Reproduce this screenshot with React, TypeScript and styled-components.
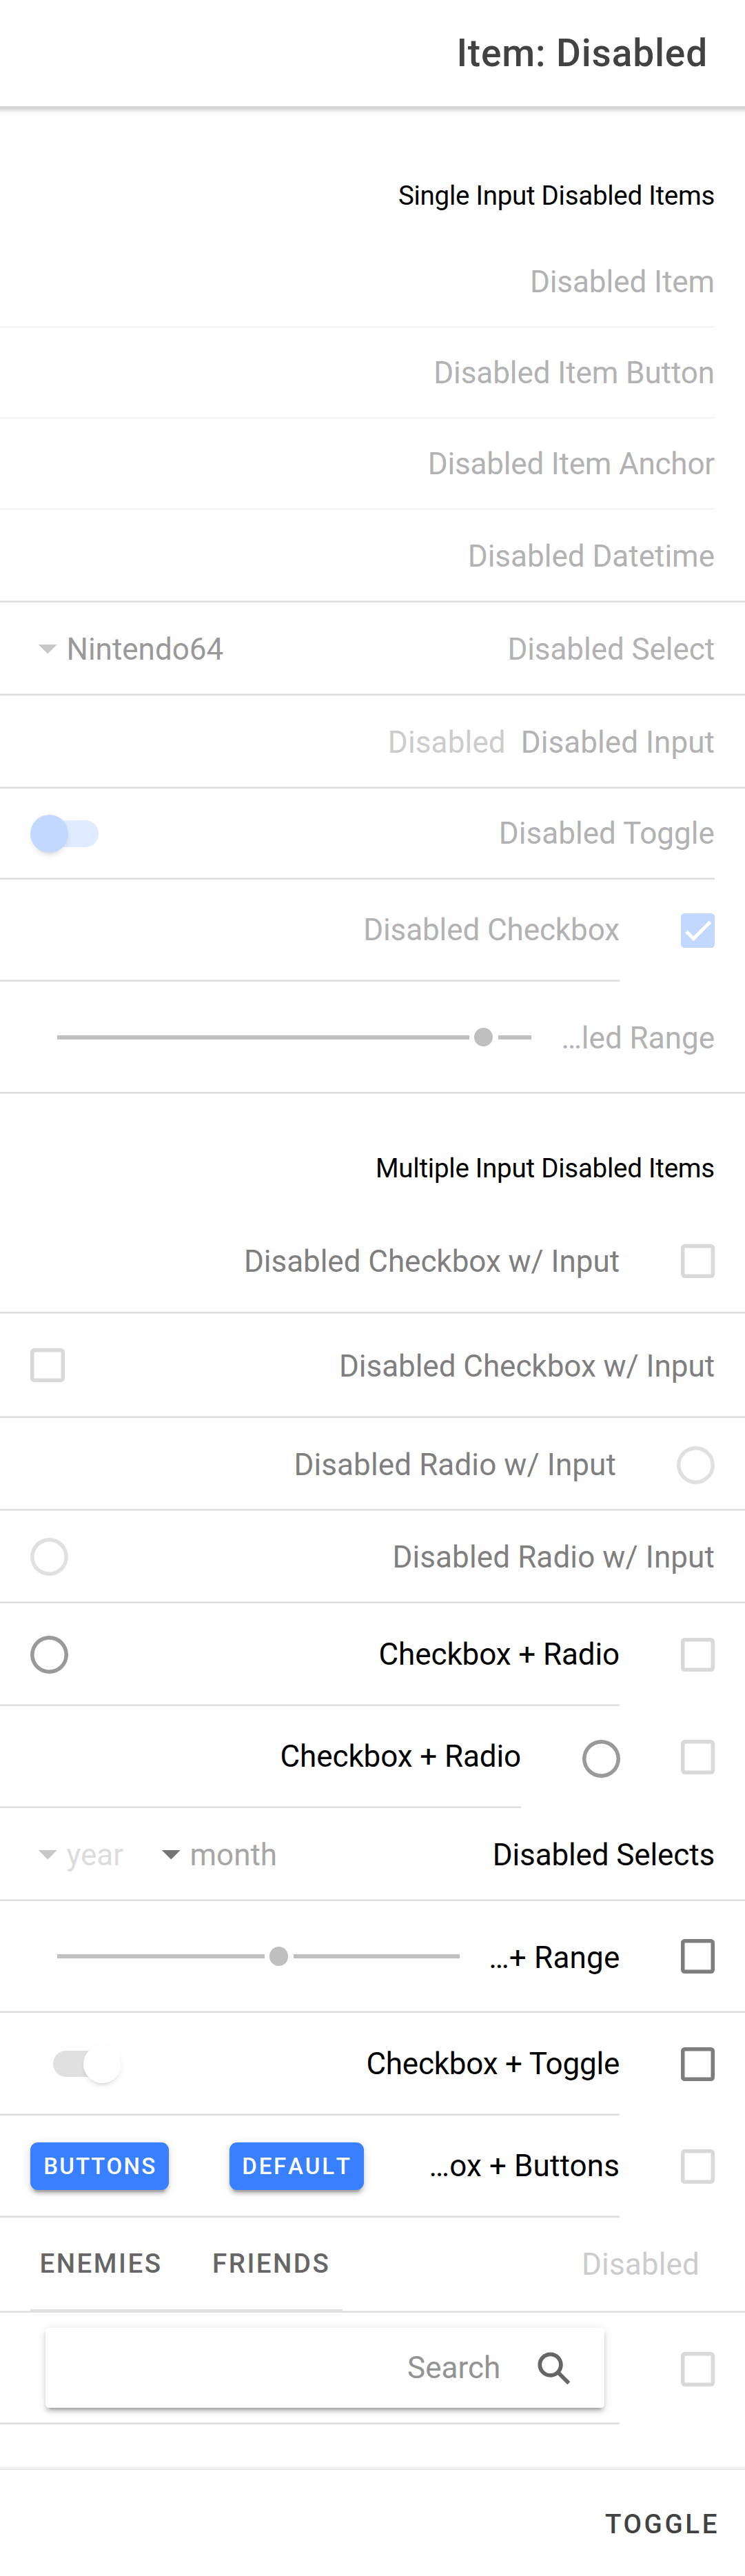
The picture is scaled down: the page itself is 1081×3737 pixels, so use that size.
import React from "react";
import styled, { createGlobalStyle } from "styled-components";

const GlobalStyle = createGlobalStyle`
  *, *::before, *::after { box-sizing: border-box; }
  html, body { margin: 0; background: #fff; }
  body { font-family: Roboto, "Liberation Sans", sans-serif; font-size: 44px; color: #000; }
`;

const Page = styled.div`
  width: 1081px;
  height: 3737px;
  display: flex;
  flex-direction: column;
  background: #fff;
  overflow: hidden;
`;

const Header = styled.header`
  height: 154px;
  flex: none;
  display: flex;
  align-items: center;
  justify-content: flex-end;
  padding: 0 54px;
`;

const HeaderShade = styled.div`
  height: 14px;
  flex: none;
  background: linear-gradient(#dadada 0, #d2d2d2 2px, #dedede 5px, #f2f2f2 8px, #fbfbfb 11px, #fff 14px);
`;

const Title = styled.h1`
  margin: 0;
  font-size: 55px;
  font-weight: 500;
  letter-spacing: 0.85px;
  line-height: 64px;
  color: #424242;
`;

const Content = styled.main`
  flex: 1;
  min-height: 0;
`;

const ListHeader = styled.div<{ $h: number; $top: number; $ls: number }>`
  height: ${(p) => p.$h}px;
  padding: ${(p) => p.$top}px 44px 0;
  text-align: right;
  font-size: 38.5px;
  line-height: 46px;
  letter-spacing: ${(p) => p.$ls}px;
`;

/* A row: the optional start slot sits at the right, after the underlined part. */
const Item = styled.div<{ $h: number }>`
  height: ${(p) => p.$h}px;
  display: flex;
  align-items: stretch;
`;

const hairlines = {
  top: "linear-gradient(#ececec 1px, #dedede 1px)",
  bottom: "linear-gradient(#dedede 2px, #ececec 2px)",
  faint: "linear-gradient(#f5f5f5 2px, #fafafa 2px)",
};

const Inner = styled.div<{ $line?: keyof typeof hairlines }>`
  flex: 1;
  min-width: 0;
  display: flex;
  align-items: center;
  padding: 0 0 2px 44px;
  background: ${(p) => hairlines[p.$line ?? "top"]} left bottom / 100% 3px no-repeat;
`;

const StartSlot = styled.div<{ $w: number; $gap?: number }>`
  flex: none;
  width: ${(p) => p.$w}px;
  display: flex;
  align-items: center;
  justify-content: flex-end;
  gap: ${(p) => p.$gap ?? 0}px;
  padding: 0 44px 2px 0;
`;

const Label = styled.span<{ $color?: string; $end?: number; $drop?: number; $ls?: number }>`
  margin-left: auto;
  margin-right: ${(p) => p.$end ?? 0}px;
  padding-top: ${(p) => p.$drop ?? 0}px;
  white-space: nowrap;
  line-height: 52px;
  letter-spacing: ${(p) => p.$ls ?? 0}px;
  color: ${(p) => p.$color ?? "#000"};
`;

const Placeholder = styled.span<{ $end: number; $drop?: number }>`
  margin-left: auto;
  margin-right: ${(p) => p.$end}px;
  padding-top: ${(p) => p.$drop ?? 0}px;
  line-height: 52px;
  letter-spacing: 0.15px;
  color: #ccc;

  & + ${Label} { margin-left: 0; }
`;

const Box = styled.span<{ $color: string; $filled?: boolean; $drop?: number; $end?: number }>`
  flex: none;
  width: 49.5px;
  height: 49.5px;
  margin-top: ${(p) => p.$drop ?? 0}px;
  margin-right: ${(p) => p.$end ?? 0}px;
  padding: 5px;
  box-shadow: inset 0 0 0 5.5px ${(p) => p.$color};
  border-radius: 5.5px;
  background: ${(p) => (p.$filled ? p.$color : "transparent")};
  svg { display: block; width: 39.5px; height: 39.5px; overflow: visible; }
`;

const Radio = styled.span<{ $color: string; $drop?: number; $end?: number }>`
  flex: none;
  width: 55px;
  height: 55px;
  margin-top: ${(p) => p.$drop ?? 0}px;
  margin-right: ${(p) => p.$end ?? 0}px;
  box-shadow: inset 0 0 0 5.5px ${(p) => p.$color};
  border-radius: 50%;
`;

const Select = styled.span<{ $color: string; $arrow: string; $w?: number }>`
  display: flex;
  align-items: center;
  width: ${(p) => (p.$w ? p.$w + "px" : "auto")};
  padding: 2px 0 0 11.5px;
  line-height: 52px;
  color: ${(p) => p.$color};
  &::before {
    content: "";
    width: 27.5px;
    height: 13.75px;
    margin-right: 13.5px;
    background: ${(p) => p.$arrow};
    clip-path: polygon(0 0, 100% 0, 50% 100%);
  }
`;

const Track = styled.span<{ $on?: boolean }>`
  display: flex;
  align-items: center;
  justify-content: ${(p) => (p.$on ? "flex-start" : "flex-end")};
  width: 99px;
  height: 38.5px;
  margin: 1px 0 0 ${(p) => (p.$on ? 0 : 33)}px;
  border-radius: 19px;
  background: ${(p) => (p.$on ? "#e1ebff" : "#e0e0e0")};
`;

const Thumb = styled.span<{ $on?: boolean }>`
  width: 55px;
  height: 55px;
  flex: none;
  border-radius: 50%;
  background: ${(p) => (p.$on ? "#c3d8ff" : "#fff")};
  box-shadow: 0 8.25px 2.75px -5.5px rgba(0, 0, 0, 0.06), 0 5.5px 5.5px 0 rgba(0, 0, 0, 0.042),
    0 2.75px 13.75px 0 rgba(0, 0, 0, 0.036);
`;

const Range = styled.span`
  display: flex;
  align-items: center;
  margin-left: 38.5px;
`;

const Bar = styled.span<{ $w: number }>`
  width: ${(p) => p.$w}px;
  height: 6px;
  background: #bfbfbf;
`;

const Knob = styled.span`
  width: 27.5px;
  height: 27.5px;
  margin: 0 7.25px;
  border-radius: 50%;
  background: #bfbfbf;
`;

const Button = styled.button<{ $w: number; $ls: number }>`
  width: ${(p) => p.$w}px;
  height: 69px;
  margin: 0 88px 0 0;
  padding: 0 0 0 2px;
  border: 0;
  border-radius: 11px;
  background: #3880ff;
  color: #fff;
  font: 500 33px/70px Roboto, sans-serif;
  font-kerning: none;
  letter-spacing: ${(p) => p.$ls}px;
  text-align: center;
  white-space: nowrap;
  box-shadow: 0 8.25px 2.75px -5.5px rgba(0, 0, 0, 0.2), 0 5.5px 5.5px 0 rgba(0, 0, 0, 0.14),
    0 2.75px 13.75px 0 rgba(0, 0, 0, 0.12);
`;

const Segment = styled.div`
  align-self: stretch;
  display: flex;
  align-items: center;
  gap: 72.5px;
  width: 453px;
  padding: 0 0 0 13.5px;
  border-bottom: 3px solid #e0e0e0;
`;

const SegmentButton = styled.span`
  font-size: 38.5px;
  font-weight: 500;
  letter-spacing: 2.5px;
  line-height: 46px;
  color: #666;
`;

const SearchBox = styled.div`
  display: flex;
  align-items: center;
  justify-content: flex-end;
  width: 811px;
  height: 115.5px;
  margin: 0 0 0 22px;
  padding: 0 44px 0 0;
  border-radius: 5.5px;
  color: #939393;
  background: #fff;
  box-shadow: 0 8.25px 2.75px -5.5px rgba(0, 0, 0, 0.2), 0 5.5px 5.5px 0 rgba(0, 0, 0, 0.14),
    0 2.75px 13.75px 0 rgba(0, 0, 0, 0.12);
  svg { width: 57.75px; height: 57.75px; margin: 2px 0 0 49px; }
`;

const Footer = styled.footer`
  height: 154px;
  flex: none;
  display: flex;
  align-items: center;
  justify-content: flex-end;
  padding: 2px 37px 0;
  font-size: 38.5px;
  font-weight: 500;
  letter-spacing: 3.6px;
  color: #424242;
`;

const FooterShade = styled.div`
  height: 5px;
  flex: none;
  background: linear-gradient(#f5f5f5, #efefef 4px, #e4e4e4 4px);
`;

const DIM = "#b2b2b2";
const HALF = "#7f7f7f";
const BOX_DIM = "#d9d9d9";
const BOX = "#7d7d7d";
const RADIO_DIM = "#e0e0e0";
const RADIO = "#999";

const Check = () => (
  <svg viewBox="0 0 24 24" fill="none" stroke="#fff" strokeWidth="3">
    <path d="M1.73 12.91 8.1 19.28 22.79 4.59" />
  </svg>
);

const SearchIcon = () => (
  <svg viewBox="0 0 512 512" fill="#666">
    <path d="M464 428L339.92 303.9a160.48 160.48 0 0030.72-94.58C370.64 120.37 298.27 48 209.32 48S48 120.37 48 209.32s72.37 161.32 161.32 161.32a160.48 160.48 0 0094.58-30.72L428 464zM209.32 319.69a110.38 110.38 0 11110.37-110.37 110.5 110.5 0 01-110.37 110.37z" />
  </svg>
);

const plainItems: [string, number][] = [
  ["Disabled Item", -0.07],
  ["Disabled Item Button", -0.08],
  ["Disabled Item Anchor", -0.2],
];

export default function App() {
  return (
    <>
      <GlobalStyle />
      <Page>
        <Header>
          <Title>Item: Disabled</Title>
        </Header>
        <HeaderShade />
        <Content>
          <ListHeader $h={176} $top={93} $ls={-0.27}>Single Input Disabled Items</ListHeader>
          {plainItems.map(([text, ls]) => (
            <Item $h={132} key={text}>
              <Inner $line="faint">
                <Label $color={DIM} $ls={ls}>{text}</Label>
              </Inner>
              <StartSlot $w={44} />
            </Item>
          ))}
          <Item $h={134}>
            <Inner>
              <Label $color={DIM} $end={44} $drop={2}>Disabled Datetime</Label>
            </Inner>
          </Item>
          <Item $h={135}>
            <Inner>
              <Select $color="#999" $arrow="#c7c7c7">Nintendo64</Select>
              <Label $color={DIM} $end={44} $drop={2} $ls={-0.07}>Disabled Select</Label>
            </Inner>
          </Item>
          <Item $h={135}>
            <Inner>
              <Placeholder $end={22} $drop={3}>Disabled</Placeholder>
              <Label $color={DIM} $end={44} $drop={3} $ls={0.06}>Disabled Input</Label>
            </Inner>
          </Item>
          <Item $h={132}>
            <Inner>
              <Track $on><Thumb $on /></Track>
              <Label $color={DIM} $ls={0.05}>Disabled Toggle</Label>
            </Inner>
            <StartSlot $w={44} />
          </Item>
          <Item $h={148}>
            <Inner>
              <Label $color={DIM} $ls={-0.09}>Disabled Checkbox</Label>
            </Inner>
            <StartSlot $w={182}>
              <Box $color="#c3d8ff" $filled $drop={2}><Check /></Box>
            </StartSlot>
          </Item>
          <Item $h={163}>
            <Inner $line="bottom">
              <Range><Bar $w={598} /><Knob /><Bar $w={48} /></Range>
              <Label $color={DIM} $end={44} $drop={3}>…led Range</Label>
            </Inner>
          </Item>

          <ListHeader $h={168} $top={85} $ls={-0.24}>Multiple Input Disabled Items</ListHeader>
          <Item $h={151}>
            <Inner $line="bottom">
              <Label $color={HALF} $end={88.5} $drop={1} $ls={-0.04}>Disabled Checkbox w/ Input</Label>
              <Box $color={BOX_DIM} $end={44} />
            </Inner>
          </Item>
          <Item $h={151}>
            <Inner>
              <Box $color={BOX_DIM} />
              <Label $color={HALF} $end={44} $drop={2} $ls={-0.04}>Disabled Checkbox w/ Input</Label>
            </Inner>
          </Item>
          <Item $h={135}>
            <Inner $line="bottom">
              <Label $color={HALF} $end={88} $drop={2} $ls={0.11}>Disabled Radio w/ Input</Label>
              <Radio $color={RADIO_DIM} $drop={4} $end={44} />
            </Inner>
          </Item>
          <Item $h={134}>
            <Inner>
              <Radio $color={RADIO_DIM} />
              <Label $color={HALF} $end={44} $drop={2} $ls={0.11}>Disabled Radio w/ Input</Label>
            </Inner>
          </Item>
          <Item $h={149}>
            <Inner>
              <Radio $color={RADIO} $drop={2} />
              <Label $drop={1} $ls={-0.11}>Checkbox + Radio</Label>
            </Inner>
            <StartSlot $w={182}><Box $color={BOX_DIM} $drop={2} /></StartSlot>
          </Item>
          <Item $h={148}>
            <Inner>
              <Label $ls={-0.11}>Checkbox + Radio</Label>
            </Inner>
            <StartSlot $w={325} $gap={88}>
              <Radio $color={RADIO} $drop={7} />
              <Box $color={BOX_DIM} $drop={2} />
            </StartSlot>
          </Item>
          <Item $h={135}>
            <Inner>
              <Select $color="#dcdcdc" $arrow="#c7c7c7" $w={179}>year</Select>
              <Select $color="#a6a6a6" $arrow="#757575">month</Select>
              <Label $end={44} $drop={2} $ls={-0.13}>Disabled Selects</Label>
            </Inner>
          </Item>
          <Item $h={162}>
            <Inner>
              <Range><Bar $w={301} /><Knob /><Bar $w={241} /></Range>
              <Label $end={88} $drop={3} $ls={0.2}>…+ Range</Label>
              <Box $color={BOX} $end={44} />
            </Inner>
          </Item>
          <Item $h={149}>
            <Inner>
              <Track><Thumb /></Track>
              <Label $drop={1} $ls={-0.22}>Checkbox + Toggle</Label>
            </Inner>
            <StartSlot $w={182}><Box $color={BOX} $drop={2} /></StartSlot>
          </Item>
          <Item $h={148}>
            <Inner>
              <Button $w={200.5} $ls={2.2}>BUTTONS</Button>
              <Button $w={195} $ls={2.8}>DEFAULT</Button>
              <Label $ls={0.12}>…ox + Buttons</Label>
            </Inner>
            <StartSlot $w={182}><Box $color={BOX_DIM} $drop={2} /></StartSlot>
          </Item>
          <Item $h={138}>
            <Inner>
              <Segment>
                <SegmentButton>ENEMIES</SegmentButton>
                <SegmentButton>FRIENDS</SegmentButton>
              </Segment>
              <Placeholder $end={66}>Disabled</Placeholder>
            </Inner>
          </Item>
          <Item $h={162}>
            <Inner>
              <SearchBox>
                Search
                <SearchIcon />
              </SearchBox>
            </Inner>
            <StartSlot $w={182}><Box $color={BOX_DIM} $drop={4} /></StartSlot>
          </Item>
        </Content>
        <FooterShade />
        <Footer>TOGGLE</Footer>
      </Page>
    </>
  );
}
